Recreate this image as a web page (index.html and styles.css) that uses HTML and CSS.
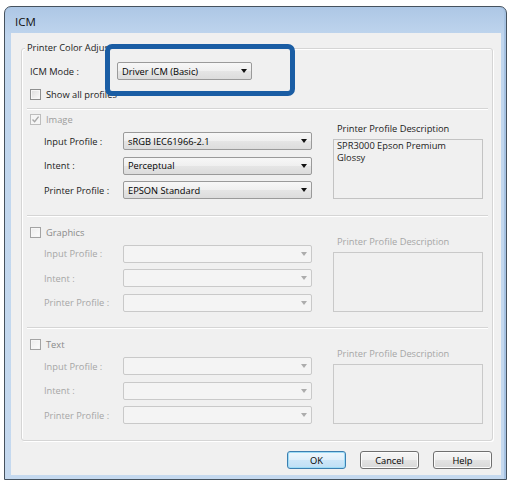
FILE: index.html
```html
<!DOCTYPE html>
<html lang="en">
<head>
  <meta charset="UTF-8">
  <meta name="viewport" content="width=device-width, initial-scale=1.0">
  <title>ICM</title>
  <link rel="stylesheet" href="styles.css">
</head>
<body>
  <div class="window">
    <div class="titlebar">ICM</div>

    <div class="client">
      <div class="group">
        <div class="group-title">Printer Color Adjustment</div>

        <div class="mode-row">
          <span class="mode-label">ICM Mode :</span>
          <div class="combo mode-combo">Driver ICM (Basic)</div>
        </div>
        <div class="check-row"><span class="checkbox"></span>Show all profiles</div>

        <div class="separator"></div>

        <!-- Image -->
        <div class="section section-first">
          <div class="profiles">
            <div class="section-head head-off">
              <span class="checkbox checkbox-off">
                <svg width="9" height="9" viewBox="0 0 9 9"><path d="M1.5 4.6 L3.6 6.8 L7.6 1.6" fill="none" stroke="#a8a8a8" stroke-width="1.4"/></svg>
              </span>Image
            </div>
            <div class="row"><span class="row-label">Input Profile :</span><div class="combo">sRGB IEC61966-2.1</div></div>
            <div class="row"><span class="row-label">Intent :</span><div class="combo">Perceptual</div></div>
            <div class="row"><span class="row-label">Printer Profile :</span><div class="combo">EPSON Standard</div></div>
          </div>
          <div class="description">
            <div class="desc-label">Printer Profile Description</div>
            <div class="desc-box">SPR3000 Epson Premium<br>Glossy</div>
          </div>
        </div>

        <div class="separator"></div>

        <!-- Graphics -->
        <div class="section disabled">
          <div class="profiles">
            <div class="section-head"><span class="checkbox"></span>Graphics</div>
            <div class="row"><span class="row-label">Input Profile :</span><div class="combo"></div></div>
            <div class="row"><span class="row-label">Intent :</span><div class="combo"></div></div>
            <div class="row"><span class="row-label">Printer Profile :</span><div class="combo"></div></div>
          </div>
          <div class="description">
            <div class="desc-label">Printer Profile Description</div>
            <div class="desc-box"></div>
          </div>
        </div>

        <div class="separator"></div>

        <!-- Text -->
        <div class="section disabled">
          <div class="profiles">
            <div class="section-head"><span class="checkbox"></span>Text</div>
            <div class="row"><span class="row-label">Input Profile :</span><div class="combo"></div></div>
            <div class="row"><span class="row-label">Intent :</span><div class="combo"></div></div>
            <div class="row"><span class="row-label">Printer Profile :</span><div class="combo"></div></div>
          </div>
          <div class="description">
            <div class="desc-label">Printer Profile Description</div>
            <div class="desc-box"></div>
          </div>
        </div>
      </div>

      <div class="buttons">
        <div class="button button-default">OK</div>
        <div class="button">Cancel</div>
        <div class="button">Help</div>
      </div>

      <!-- callout frame around the ICM mode selector -->
      <div class="highlight"></div>
    </div>
  </div>
</body>
</html>
```

FILE: styles.css
```css
body {
  margin: 0;
  background: #fff;
  font-family: "Open Sans", "Noto Sans", sans-serif;
  font-size: 9.3px;
  color: #1b1b1b;
}

.window {
  box-sizing: border-box;
  width: 503px;
  height: 474px;
  margin: 6px 0 0 4px;
  padding: 0 5px 4px 6px;
  border: 1px solid #46525e;
  border-radius: 7px 7px 0 0;
  background: linear-gradient(to bottom, #adc7e5, #c0d6ee 30px, #c5d9ef);
  box-shadow: inset -2px 0 #a6c2e2;
  display: flex;
  flex-direction: column;
}

.titlebar {
  height: 26px;
  padding: 3px 0 0 4px;
  box-sizing: border-box;
  display: flex;
  align-items: center;
  font-size: 11.5px;
  color: #111;
}

.client {
  position: relative;
  flex: 1;
  background: #f0f0f0;
  padding: 15px 8px 0 10px;
}

/* group box */
.group {
  border: 1px solid #d5d5d5;
  border-radius: 3px;
  box-shadow: inset 1px 1px #fff, 1px 1px #fff;
  padding: 0 4px 12.5px 8px;
}

.group-title {
  width: max-content;
  margin: -7px 0 0 -5px;
  padding: 0 2px;
  line-height: 12px;
  background: #f0f0f0;
}

.mode-row {
  display: flex;
  align-items: center;
  height: 18px;
  margin-top: 8px;
}

.mode-label {
  width: 87px;
}

.mode-combo {
  position: relative;
  z-index: 2;
  width: 135px;
}

.check-row {
  display: flex;
  align-items: center;
  gap: 5px;
  height: 14px;
  margin-top: 7px;
}

.separator {
  height: 1px;
  margin: 7px 0 0 -3px;
  background: #d5d5d5;
  border-bottom: 1px solid #fff;
}

.section + .separator {
  margin-top: 12px;
}

/* checkboxes */
.checkbox {
  box-sizing: border-box;
  width: 11px;
  height: 11px;
  border: 1px solid #8e8f8f;
  background: linear-gradient(135deg, #dcdcdc, #fbfbfb);
  box-shadow: inset 0 0 0 1px #f6f6f6;
  display: flex;
  align-items: center;
  justify-content: center;
}

.checkbox-off {
  border-color: #bdbdbd;
  background: #f5f5f5;
  box-shadow: none;
}

/* image / graphics / text sections */
.section {
  display: flex;
  padding-top: 6px;
}

.section-first {
  padding-top: 0;
}

.profiles {
  width: 282px;
}

.section-head {
  display: flex;
  align-items: center;
  gap: 5px;
  height: 19px;
}

.head-off {
  color: #9c9c9c;
}

.row {
  display: flex;
  align-items: center;
  height: 24.5px;
  padding-left: 14px;
}

.row-label {
  width: 79px;
}

.row .combo {
  width: 189px;
}

.combo {
  box-sizing: border-box;
  height: 18px;
  display: flex;
  align-items: center;
  padding: 0 4px 0 4px;
  border: 1px solid #9a9a9a;
  border-radius: 2px;
  background: linear-gradient(#f7f7f7, #efefef 50%, #e5e5e5 51%, #dcdcdc);
  color: #000;
}

.combo::after {
  content: "";
  margin-left: auto;
  border-left: 3.5px solid transparent;
  border-right: 3.5px solid transparent;
  border-top: 4px solid #111;
}

.description {
  width: 150px;
  margin-left: 21px;
  padding-top: 13px;
}

.desc-label {
  line-height: 12px;
  padding-left: 4px;
}

.desc-box {
  box-sizing: border-box;
  height: 60px;
  margin-top: 4px;
  padding: 0 3px;
  line-height: 12px;
  border: 1px solid #c3c3c3;
  background: #f0f0f0;
  color: #1b1b1b;
}

/* greyed-out sections */
.disabled {
  color: #a6a6a6;
}

.disabled .section-head {
  color: #8a8a8a;
}

.disabled .checkbox {
  border-color: #a3a3a3;
  background: linear-gradient(135deg, #ececec, #fdfdfd);
}

.disabled .combo {
  border-color: #c9c9c9;
  background: #f4f4f4;
}

.disabled .combo::after {
  border-top-color: #acacac;
}

.disabled .desc-box {
  border-color: #c9c9c9;
}

/* dialog buttons */
.buttons {
  display: flex;
  justify-content: flex-end;
  gap: 14px;
  margin-top: 10px;
  padding-right: 1px;
}

.button {
  box-sizing: border-box;
  width: 59px;
  height: 18px;
  display: flex;
  align-items: center;
  justify-content: center;
  border: 1px solid #707070;
  border-radius: 3px;
  background: linear-gradient(#f6f6f6, #efefef 50%, #e3e3e3 51%, #d8d8d8);
  box-shadow: inset 0 0 0 1px #fcfcfc;
  color: #000;
}

.button-default {
  border-color: #3c7fb1;
  background: linear-gradient(#eef7fd, #deeffb 50%, #cde6f8 51%, #bfdff5);
  box-shadow: inset 0 0 0 1px #9edcf6;
}

.highlight {
  position: absolute;
  left: 94px;
  top: 11px;
  z-index: 1;
  box-sizing: border-box;
  width: 190px;
  height: 52px;
  border: 5px solid #1a5da4;
  border-radius: 7px;
  background: #f0f0f0;
}
```
